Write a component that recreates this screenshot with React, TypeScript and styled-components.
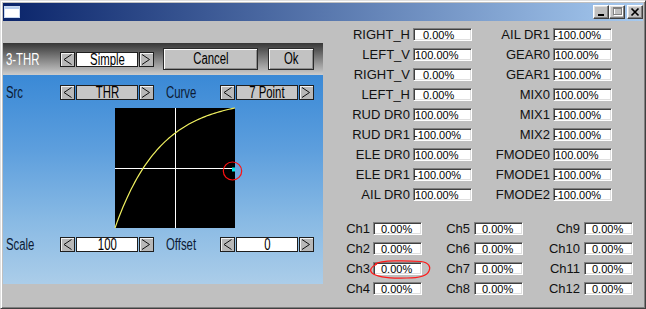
import React from "react";
import styled, { createGlobalStyle } from "styled-components";

const GlobalStyle = createGlobalStyle`
  html, body { margin: 0; padding: 0; background: #c0c0c0; }
  body { font-family: "Liberation Sans", Arial, sans-serif; }
`;

const LCD = `"Liberation Sans", Arial, sans-serif`;

const Window = styled.div`
  position: relative;
  width: 646px;
  height: 309px;
  box-sizing: border-box;
  background: #c0c0c0;
  border: 1px solid;
  border-color: #dfdfdf #404040 #404040 #dfdfdf;
  box-shadow: inset 1px 1px 0 #fff, inset -1px -1px 0 #808080;
  padding: 2px;
  display: flex;
  flex-direction: column;
  overflow: hidden;
`;

const TitleBar = styled.div`
  flex: none;
  height: 18px;
  background: linear-gradient(to right, #0a246a, #a6caf0);
  display: flex;
  align-items: center;
  padding-left: 1px;
`;

const TitleSpacer = styled.div`
  flex: 1;
`;

const CaptionBtn = styled.div<{ $gap?: number }>`
  width: 16px;
  height: 14px;
  box-sizing: border-box;
  background: #c0c0c0;
  border: 1px solid;
  border-color: #fff #404040 #404040 #fff;
  box-shadow: inset -1px -1px 0 #808080, inset 1px 1px 0 #dfdfdf;
  margin-left: ${(p) => p.$gap ?? 0}px;
  display: flex;
`;

const Body = styled.div`
  flex: 1;
  display: flex;
`;

const LeftColumn = styled.div`
  width: 320px;
  flex: none;
  padding-top: 22px;
`;

const Screen = styled.div`
  height: 241px;
  display: flex;
  flex-direction: column;
`;

const ScreenHeader = styled.div`
  height: 32px;
  flex: none;
  background: linear-gradient(to bottom, #363636, #8a8a8a 55%, #cdcdcd);
  display: flex;
  align-items: center;
  padding-left: 3px;
`;

const ScreenBody = styled.div`
  flex: 1;
  background: linear-gradient(to bottom, #3a89d6 0%, #5c9edd 35%, #89bae4 70%, #abcde9 100%);
  padding: 10px 0 0 3px;
  display: flex;
  flex-direction: column;
`;

const ScreenRow = styled.div<{ $mt?: number }>`
  display: flex;
  align-items: center;
  height: 15px;
  margin-top: ${(p) => p.$mt ?? 0}px;
`;

/* narrow "LCD" lettering of the simulated transmitter screen */
const Narrow = styled.span<{ $origin?: string }>`
  display: inline-block;
  font-family: ${LCD};
  font-size: 16px;
  transform: scaleX(0.71);
  transform-origin: ${(p) => p.$origin ?? "center"};
  white-space: nowrap;
`;

const ScreenLabel = styled.div<{ $w: number; $pl?: number; $light?: boolean }>`
  width: ${(p) => p.$w}px;
  box-sizing: border-box;
  padding-left: ${(p) => p.$pl ?? 0}px;
  line-height: 15px;
  color: ${(p) => (p.$light ? "#ffffff" : "#0c1a33")};
  white-space: nowrap;
`;

const Spin = styled.div`
  width: 94px;
  height: 15px;
  display: flex;
  gap: 1px;
`;

const ArrowBtn = styled.div`
  width: 15px;
  height: 15px;
  flex: none;
  box-sizing: border-box;
  background: #b8b8b8;
  border: 1px solid #1e1e1e;
  box-shadow: inset 1px 1px 0 #f2f2f2;
  display: flex;
`;

const SpinValue = styled.div<{ $light: boolean }>`
  flex: 1;
  box-sizing: border-box;
  border: 1px solid #1e1e1e;
  background: ${(p) => (p.$light ? "#ffffff" : "#c6c6c6")};
  line-height: 13px;
  text-align: center;
  color: #000;
  white-space: nowrap;
  overflow: hidden;
`;

const PanelButton = styled.div<{ $w: number; $ml: number }>`
  width: ${(p) => p.$w}px;
  height: 22px;
  margin-left: ${(p) => p.$ml}px;
  box-sizing: border-box;
  background: #c2c2c2;
  border: 1px solid #2a2a2a;
  box-shadow: inset 1px 1px 0 #ffffff, inset -1px -1px 0 #8c8c8c;
  line-height: 20px;
  text-align: center;
  color: #000;
`;

const ChartBox = styled.svg`
  display: block;
  margin: 8px 0 0 109px;
  overflow: visible;
`;

const RightColumn = styled.div`
  flex: 1;
  padding-top: 7px;
  display: flex;
  flex-direction: column;
`;

const ValueGrid = styled.div`
  display: grid;
  grid-template-columns: 87px 59px 75px 59px;
  grid-auto-rows: 13px;
  column-gap: 3px;
  row-gap: 7px;
`;

const ChannelGrid = styled.div`
  margin-top: 21px;
  display: grid;
  grid-template-columns: 50px 49px 52px 49px 61px 49px;
  grid-auto-rows: 13px;
  row-gap: 7px;
`;

const FieldLabel = styled.div<{ $pr?: number }>`
  display: flex;
  align-items: center;
  justify-content: flex-end;
  padding-right: ${(p) => p.$pr ?? 0}px;
  font-family: "Liberation Sans", Arial, sans-serif;
  font-size: 13px;
  color: #111;
  white-space: nowrap;
`;

const Field = styled.div<{ $pad: number }>`
  box-sizing: border-box;
  height: 13px;
  background: #ffffff;
  border: 1px solid;
  border-color: #808080 #ffffff #ffffff #808080;
  box-shadow: inset 1px 1px 0 #404040, inset -1px -1px 0 #dfdfdf;
  padding-left: ${(p) => p.$pad}px;
  display: flex;
  align-items: center;
  font-family: "Liberation Sans", Arial, sans-serif;
  font-size: 11px;
  color: #000;
  white-space: nowrap;
  overflow: hidden;
`;

const Scribble = styled.svg`
  position: absolute;
  left: 366px;
  top: 257px;
  overflow: visible;
  pointer-events: none;
`;

const LeftArrow = () => (
  <svg width="13" height="13" viewBox="0 0 13 13">
    <polyline points="10.5,1.5 3,6.5 10.5,11.5" fill="none" stroke="#111" strokeWidth="1" />
  </svg>
);

const RightArrow = () => (
  <svg width="13" height="13" viewBox="0 0 13 13">
    <polyline points="2,1.5 9.5,6.5 2,11.5" fill="none" stroke="#111" strokeWidth="1" />
  </svg>
);

const SpinBox = ({ value, light }: { value: string; light: boolean }) => (
  <Spin>
    <ArrowBtn>
      <LeftArrow />
    </ArrowBtn>
    <SpinValue $light={light}>
      <Narrow>{value}</Narrow>
    </SpinValue>
    <ArrowBtn>
      <RightArrow />
    </ArrowBtn>
  </Spin>
);

const padFor = (v: string, zeroPad: number) => {
  if (v.startsWith("-")) return 0;
  if (v.startsWith("100")) return 1;
  return zeroPad;
};

const left = [
  ["RIGHT_H", "0.00%"],
  ["LEFT_V", "100.00%"],
  ["RIGHT_V", "0.00%"],
  ["LEFT_H", "0.00%"],
  ["RUD DR0", "100.00%"],
  ["RUD DR1", "-100.00%"],
  ["ELE DR0", "100.00%"],
  ["ELE DR1", "-100.00%"],
  ["AIL DR0", "100.00%"],
];

const right = [
  ["AIL DR1", "-100.00%"],
  ["GEAR0", "100.00%"],
  ["GEAR1", "-100.00%"],
  ["MIX0", "100.00%"],
  ["MIX1", "-100.00%"],
  ["MIX2", "-100.00%"],
  ["FMODE0", "100.00%"],
  ["FMODE1", "-100.00%"],
  ["FMODE2", "-100.00%"],
];

const curvePath = (() => {
  const a = 2.65;
  const pts: string[] = [];
  for (let i = 0; i <= 60; i++) {
    const t = i / 60;
    const y = (1 - Math.exp(-a * t)) / (1 - Math.exp(-a));
    pts.push(`${(t * 120).toFixed(2)},${(120 - y * 120).toFixed(2)}`);
  }
  return "M" + pts.join(" L");
})();

export default function App() {
  return (
    <>
      <GlobalStyle />
      <Window>
        <TitleBar>
          <svg width="16" height="12" viewBox="0 0 16 12">
            <rect x="0.5" y="0.5" width="15" height="11" fill="#ffffff" stroke="#c8d8f0" />
            <rect x="1" y="1" width="14" height="2" fill="#b8cff0" />
          </svg>
          <TitleSpacer />
          <CaptionBtn>
            <svg width="14" height="12" viewBox="0 0 14 12">
              <rect x="4" y="8" width="6" height="2" fill="#000" />
            </svg>
          </CaptionBtn>
          <CaptionBtn>
            <svg width="14" height="12" viewBox="0 0 14 12">
              <rect x="4.5" y="2.5" width="8" height="7" fill="none" stroke="#ffffff" />
              <rect x="3.5" y="1.5" width="8" height="7" fill="none" stroke="#808080" />
              <rect x="3" y="1" width="9" height="2" fill="#808080" />
            </svg>
          </CaptionBtn>
          <CaptionBtn $gap={2}>
            <svg width="14" height="12" viewBox="0 0 14 12">
              <path d="M3.5 2.5 L10.5 9.5 M10.5 2.5 L3.5 9.5" stroke="#000" strokeWidth="1.7" />
            </svg>
          </CaptionBtn>
        </TitleBar>
        <Body>
          <LeftColumn>
            <Screen>
              <ScreenHeader>
                <ScreenLabel $w={54} $light>
                  <Narrow $origin="left">3-THR</Narrow>
                </ScreenLabel>
                <SpinBox value="Simple" light />
                <PanelButton $w={95} $ml={9}>
                  <Narrow>Cancel</Narrow>
                </PanelButton>
                <PanelButton $w={46} $ml={10}>
                  <Narrow>Ok</Narrow>
                </PanelButton>
              </ScreenHeader>
              <ScreenBody>
                <ScreenRow>
                  <ScreenLabel $w={54}>
                    <Narrow $origin="left">Src</Narrow>
                  </ScreenLabel>
                  <SpinBox value="THR" light={false} />
                  <ScreenLabel $w={66} $pl={12}>
                    <Narrow $origin="left">Curve</Narrow>
                  </ScreenLabel>
                  <SpinBox value="7 Point" light={false} />
                </ScreenRow>
                <ChartBox width="120" height="120" viewBox="0 0 120 120">
                  <rect x="0" y="0" width="120" height="120" fill="#000" />
                  <line x1="60.5" y1="0" x2="60.5" y2="120" stroke="#fff" strokeWidth="1" />
                  <line x1="0" y1="60.5" x2="120" y2="60.5" stroke="#fff" strokeWidth="1" />
                  <path d={curvePath} fill="none" stroke="#f0f060" strokeWidth="1.2" />
                  <rect x="117" y="59.5" width="3" height="4" fill="#00e8e8" />
                  <ellipse cx="117.5" cy="63" rx="9.2" ry="9" fill="none" stroke="#ff1010" strokeWidth="1.2" />
                </ChartBox>
                <ScreenRow $mt={9}>
                  <ScreenLabel $w={54}>
                    <Narrow $origin="left">Scale</Narrow>
                  </ScreenLabel>
                  <SpinBox value="100" light />
                  <ScreenLabel $w={66} $pl={12}>
                    <Narrow $origin="left">Offset</Narrow>
                  </ScreenLabel>
                  <SpinBox value="0" light />
                </ScreenRow>
              </ScreenBody>
            </Screen>
          </LeftColumn>
          <RightColumn>
            <ValueGrid>
              {left.map(([l, v], i) => (
                <React.Fragment key={l}>
                  <FieldLabel>{l}</FieldLabel>
                  <Field $pad={padFor(v, 9)}>{v}</Field>
                  <FieldLabel>{right[i][0]}</FieldLabel>
                  <Field $pad={padFor(right[i][1], 9)}>{right[i][1]}</Field>
                </React.Fragment>
              ))}
            </ValueGrid>
            <ChannelGrid>
              {[0, 1, 2, 3].map((r) => (
                <React.Fragment key={r}>
                  <FieldLabel $pr={3}>{`Ch${r + 1}`}</FieldLabel>
                  <Field $pad={7}>0.00%</Field>
                  <FieldLabel $pr={4}>{`Ch${r + 5}`}</FieldLabel>
                  <Field $pad={7}>0.00%</Field>
                  <FieldLabel $pr={4}>{`Ch${r + 9}`}</FieldLabel>
                  <Field $pad={7}>0.00%</Field>
                </React.Fragment>
              ))}
            </ChannelGrid>
          </RightColumn>
        </Body>
        <Scribble width="66" height="24" viewBox="0 0 66 24">
          <path
            d="M8 6 C14 2, 40 2.5, 54 3.5 C62 4.5, 64 9, 62 13 C60 18, 50 20, 40 20 C25 20.5, 10 19, 5 15 C2 12, 4 9, 10 6"
            fill="none"
            stroke="#ff1a1a"
            strokeWidth="1.2"
          />
        </Scribble>
      </Window>
    </>
  );
}
